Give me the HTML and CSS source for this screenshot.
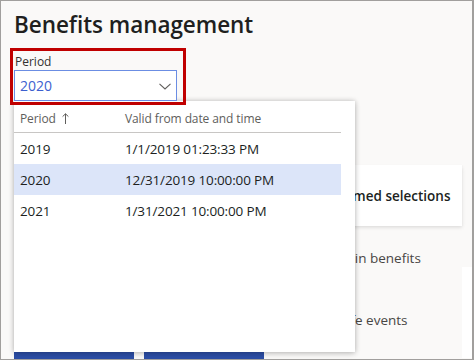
FILE: index.html
```html
<!DOCTYPE html>
<html lang="en">
<head>
  <meta charset="UTF-8">
  <meta name="viewport" content="width=device-width, initial-scale=1.0">
  <title>Benefits management</title>
  <link rel="stylesheet" href="styles.css">
</head>
<body>
  <div class="frame">
    <h1 class="page-title">Benefits management</h1>

    <div class="highlight">
      <label class="field-label" for="period">Period</label>
      <div class="select" id="period">
        <span class="select-value">2020</span>
        <svg class="chevron" width="12" height="7" viewBox="0 0 12 7">
          <path d="M0.5 0.8 L6 6 L11.5 0.8" fill="none" stroke="#605e5c" stroke-width="1.1"/>
        </svg>
      </div>
    </div>

    <!-- period lookup, opened over the workspace -->
    <div class="dropdown">
      <div class="lookup-row lookup-head">
        <span class="col-period">Period
          <svg class="sort-arrow" width="7" height="11" viewBox="0 0 7 11">
            <path d="M3.5 0.8 V11 M0.6 3.6 L3.5 0.8 L6.4 3.6" fill="none" stroke="#605e5c" stroke-width="1"/>
          </svg>
        </span>
        <span class="col-valid">Valid from date and time</span>
      </div>
      <div class="lookup-row">
        <span class="col-period">2019</span>
        <span class="col-valid">1/1/2019 01:23:33 PM</span>
      </div>
      <div class="lookup-row selected">
        <span class="col-period">2020</span>
        <span class="col-valid">12/31/2019 10:00:00 PM</span>
      </div>
      <div class="lookup-row">
        <span class="col-period">2021</span>
        <span class="col-valid">1/31/2021 10:00:00 PM</span>
      </div>
    </div>

    <div class="workspace">
      <div class="workspace-main">
        <div class="tiles">
          <div class="tile"></div>
          <div class="tile"></div>
        </div>
      </div>
      <div class="summary">
        <div class="summary-card">Confirmed selections</div>
        <a class="summary-link link-enroll">Enroll in benefits</a>
        <a class="summary-link link-life">Life events</a>
      </div>
      <div class="side-panel"></div>
    </div>
  </div>
</body>
</html>
```

FILE: styles.css
```css
* {
  box-sizing: border-box;
}

html,
body {
  margin: 0;
  padding: 0;
}

body {
  width: 474px;
  height: 360px;
  overflow: hidden;
  font-family: "Open Sans", "Noto Sans", sans-serif;
  color: #201f1e;
  background-color: #faf9f8;
}

.frame {
  position: relative;
  height: 360px;
  border: 1px solid #a19f9d;
  border-right-width: 2px;
  background-color: #faf9f8;
  overflow: hidden;
}

.page-title {
  margin: 0;
  padding: 8px 0 0 13px;
  font-size: 22.5px;
  font-weight: 600;
  line-height: 32px;
  letter-spacing: -0.05px;
  color: #201f1e;
}

.highlight {
  position: relative;
  z-index: 2;
  width: 176px;
  margin: 7px 0 0 9px;
  padding: 2px 6px 1px 1px;
  border: 3px solid #c00000;
}

.field-label {
  display: block;
  padding-left: 1px;
  font-size: 12px;
  line-height: 17px;
  color: #323130;
}

.select {
  display: flex;
  align-items: center;
  justify-content: space-between;
  height: 31px;
  padding: 0 5px 0 5px;
  background-color: #fff;
  border: 1px solid #6b8de3;
}

.select-value {
  font-size: 14px;
  color: #3d5fcf;
}

.chevron {
  margin-top: 1px;
}

.dropdown {
  position: absolute;
  z-index: 1;
  left: 13px;
  top: 100px;
  width: 341px;
  height: 251px;
  padding-right: 14px;
  background-color: #fff;
  box-shadow: 0 0 5px rgba(0, 0, 0, 0.22), 0 2px 6px rgba(0, 0, 0, 0.12);
}

.lookup-row {
  display: flex;
  align-items: center;
  height: 31px;
  font-size: 13.5px;
  letter-spacing: -0.15px;
  color: #201f1e;
}

.lookup-head {
  height: 32px;
  padding-top: 3px;
  font-size: 12px;
  letter-spacing: -0.1px;
  color: #605e5c;
  border-bottom: 1px solid #c8c6c4;
}

.lookup-row.selected {
  background-color: #dce5f9;
}

.col-period {
  display: flex;
  align-items: center;
  width: 111px;
  padding-left: 6px;
}

.sort-arrow {
  margin-left: 6px;
}

.workspace {
  display: flex;
  height: 253px;
}

.workspace-main {
  width: 298px;
  flex-shrink: 0;
  padding: 247px 0 0 13px;
}

.tiles {
  display: flex;
  gap: 10px;
}

.tile {
  width: 120px;
  height: 80px;
  background-color: #2c4ea6;
}

.summary {
  width: 163px;
  flex-shrink: 0;
  padding-top: 60px;
}

.summary-card {
  display: flex;
  align-items: center;
  height: 61px;
  padding-left: 14px;
  font-size: 13.5px;
  font-weight: 600;
  background-color: #fff;
  box-shadow: 0 1.6px 3.6px rgba(0, 0, 0, 0.13), 0 0.3px 0.9px rgba(0, 0, 0, 0.11);
}

.summary-link {
  display: block;
  font-size: 13.5px;
  line-height: 20px;
  color: #484644;
}

.link-enroll {
  margin: 22px 0 0 16px;
}

.link-life {
  margin: 42px 0 0 41px;
}

.side-panel {
  width: 160px;
  flex-shrink: 0;
  margin-top: 162px;
  background-color: #fff;
}
```
